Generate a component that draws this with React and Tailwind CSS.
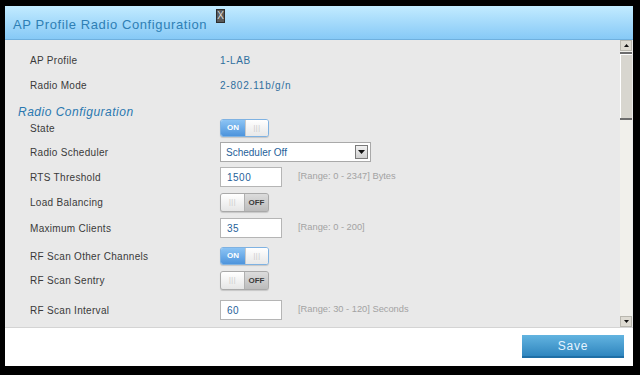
import React from "react";

const font = { fontFamily: '"Liberation Sans", Arial, sans-serif' };

function Toggle({ on }) {
    if (on) {
        return (
            <div className="flex h-[18px] w-[49px] rounded-[3px] border border-[#7fb2e2] bg-white shadow-[0_1px_1px_rgba(0,0,0,0.15)] overflow-hidden">
                <div className="flex w-[24px] items-center justify-center bg-gradient-to-b from-[#8cc4f4] to-[#4d94dc] text-[8px] font-bold text-white">ON</div>
                <div className="flex flex-1 items-center justify-center border-l border-[#c9c9c9] bg-gradient-to-b from-white to-[#e8e8e8] text-[7px] text-[#c8c8c8] tracking-[0.5px]">|||</div>
            </div>
        );
    }
    return (
        <div className="flex h-[19px] w-[49px] rounded-[3px] border border-[#a9a9a9] bg-[#c8c8c8] shadow-[0_1px_1px_rgba(0,0,0,0.15)] overflow-hidden">
            <div className="flex w-[24px] items-center justify-center bg-gradient-to-b from-white to-[#e6e6e6] border-r border-[#b0b0b0] text-[7px] text-[#c8c8c8] tracking-[0.5px]">|||</div>
            <div className="flex flex-1 items-center justify-center bg-gradient-to-b from-[#dcdcdc] to-[#bcbcbc] text-[8px] font-bold text-[#3a3a3a]">OFF</div>
        </div>
    );
}

function Input({ value }) {
    return (
        <div className="flex h-[20px] w-[62px] items-center border border-[#b5b5b5] bg-white pl-[6px] text-[10px] tracking-[0.5px] text-[#1f5f9a]">
            {value}
        </div>
    );
}

function Row({ label, mt, h, children }) {
    return (
        <div className={`flex items-center ${mt} ${h}`}>
            <div className="w-[190px] text-[10px] tracking-[0.3px] text-[#3a3a3a]">{label}</div>
            <div className="flex items-center">{children}</div>
        </div>
    );
}

function Range({ children }) {
    return <span className="ml-[16px] text-[9.3px] text-[#a3a3a3]">{children}</span>;
}

export default function App() {
    return (
        <div className="h-[375px] w-[640px] bg-black pl-[5px] pt-[6px]" style={font}>
            <div className="flex h-[360px] w-[628px] flex-col bg-[#e9e9e9]">
                {/* header */}
                <div className="flex h-[34px] items-start border-b border-[#6fb0de] bg-gradient-to-b from-[#c2ebff] to-[#86c9f6] pl-[8px]">
                    <div className="mt-[9px] text-[13px] tracking-[0.6px] text-[#2e7fb5]">AP Profile Radio Configuration</div>
                    <div className="ml-[9px] mt-[3px] flex h-[14px] w-[9px] items-center justify-center border border-[#2e2e2e] bg-[#5a5a5a] text-[10px] leading-none text-[#dcdcdc]">X</div>
                </div>

                {/* content */}
                <div className="flex h-[287px]">
                    <div className="flex-1 overflow-hidden pl-[25px] pt-[10px]">
                        <Row label="AP Profile" mt="mt-0" h="h-[20px]">
                            <span className="text-[10px] tracking-[0.6px] text-[#2f6f9e]">1-LAB</span>
                        </Row>
                        <Row label="Radio Mode" mt="mt-[5px]" h="h-[20px]">
                            <span className="text-[10px] tracking-[0.8px] text-[#2f6f9e]">2-802.11b/g/n</span>
                        </Row>
                        <div className="-ml-[12px] mt-[8px] h-[16px] text-[12px] italic tracking-[0.5px] text-[#2a78b0]">Radio Configuration</div>
                        <Row label="State" mt="mt-0" h="h-[18px]">
                            <Toggle on />
                        </Row>
                        <Row label="Radio Scheduler" mt="mt-[5px]" h="h-[20px]">
                            <div className="flex h-[20px] w-[151px] items-center justify-between border border-[#a9a9a9] bg-white pl-[5px] pr-[2px]">
                                <span className="text-[10px] text-[#1f5f9a]">Scheduler Off</span>
                                <div className="flex h-[14px] w-[13px] items-center justify-center border border-[#7a7a7a] bg-gradient-to-b from-[#f2f2f2] to-[#cfcfcf]">
                                    <svg width="7" height="4" viewBox="0 0 7 4"><path d="M0 0h7L3.5 4z" fill="#111" /></svg>
                                </div>
                            </div>
                        </Row>
                        <Row label="RTS Threshold" mt="mt-[5px]" h="h-[20px]">
                            <Input value="1500" />
                            <Range>[Range: 0 - 2347] Bytes</Range>
                        </Row>
                        <Row label="Load Balancing" mt="mt-[6px]" h="h-[19px]">
                            <Toggle />
                        </Row>
                        <Row label="Maximum Clients" mt="mt-[6px]" h="h-[20px]">
                            <Input value="35" />
                            <Range>[Range: 0 - 200]</Range>
                        </Row>
                        <Row label="RF Scan Other Channels" mt="mt-[9px]" h="h-[18px]">
                            <Toggle on />
                        </Row>
                        <Row label="RF Scan Sentry" mt="mt-[6px]" h="h-[19px]">
                            <Toggle />
                        </Row>
                        <Row label="RF Scan Interval" mt="mt-[10px]" h="h-[20px]">
                            <Input value="60" />
                            <Range>[Range: 30 - 120] Seconds</Range>
                        </Row>
                    </div>

                    {/* scrollbar */}
                    <div className="mr-[1px] flex w-[12px] flex-col bg-[#f1f0eb]">
                        <div className="flex h-[11px] items-center justify-center border border-[#b9b7ae] bg-[#dedbd2]">
                            <svg width="5" height="3" viewBox="0 0 5 3"><path d="M0 3h5L2.5 0z" fill="#111" /></svg>
                        </div>
                        <div className="mt-[1px] h-[68px] border-y-2 border-[#6d6d6d] bg-[#d8d6cf] shadow-[inset_1px_1px_0_#fff]"></div>
                        <div className="flex-1"></div>
                        <div className="flex h-[11px] items-center justify-center border border-[#b9b7ae] bg-[#dedbd2]">
                            <svg width="5" height="3" viewBox="0 0 5 3"><path d="M0 0h5L2.5 3z" fill="#111" /></svg>
                        </div>
                    </div>
                </div>

                {/* footer */}
                <div className="flex h-[39px] items-start justify-end border-t border-[#d4d4d4] bg-white pr-[9px] pt-[7px]">
                    <button className="h-[23px] w-[102px] border-b-2 border-[#1f6fa6] bg-gradient-to-b from-[#62b4e0] to-[#2f86bf] text-[12px] tracking-[0.8px] text-[#e6f4ff]">Save</button>
                </div>
            </div>
        </div>
    );
}
